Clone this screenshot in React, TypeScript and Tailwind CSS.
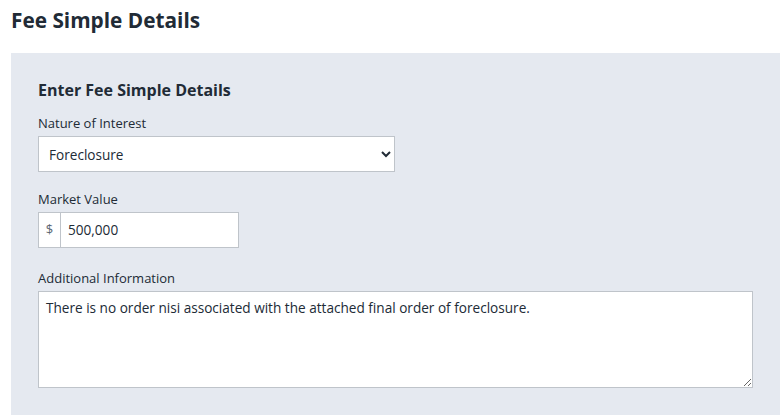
import { useState } from 'react';

export default function App() {
    const [interest, setInterest] = useState('Foreclosure');
    const [value, setValue] = useState('500,000');
    const [info, setInfo] = useState(
        'There is no order nisi associated with the attached final order of foreclosure.'
    );

    return (
        <div className="min-h-[415px] bg-white font-['Open_Sans',sans-serif] text-[#212b36]">
            <h1 className="pl-[11px] pt-[6px] text-[20.8px] leading-[28px] font-bold">
                Fee Simple Details
            </h1>

            <div className="mt-[19px] ml-[11px] bg-[#e5e9f0] pl-[27px] pr-[27px] pt-[25px] pb-[28px]">
                <h2 className="text-[16px] leading-[24px] font-bold">
                    Enter Fee Simple Details
                </h2>

                <label className="mt-[12px] block text-[13px] leading-[18px]">
                    Nature of Interest
                </label>
                <select
                    value={interest}
                    onChange={(e) => setInterest(e.target.value)}
                    className="mt-[4px] block h-[36px] w-[357px] border border-[#bfc4ca] bg-white pl-[6px] pr-[6px] text-[13.6px] outline-none"
                >
                    <option>Foreclosure</option>
                    <option>Fee Simple</option>
                    <option>Leasehold</option>
                </select>

                <label className="mt-[18px] block text-[13px] leading-[18px]">
                    Market Value
                </label>
                <div className="mt-[4px] flex h-[36px] w-[201px] border border-[#bfc4ca] bg-white">
                    <span className="flex w-[22px] items-center justify-center border-r border-[#bfc4ca] text-[13px] text-[#5b6672]">
                        $
                    </span>
                    <input
                        value={value}
                        onChange={(e) => setValue(e.target.value)}
                        className="min-w-0 flex-1 pl-[7px] text-[13.6px] outline-none"
                    />
                </div>

                <label className="mt-[21px] block text-[13px] leading-[18px]">
                    Additional Information
                </label>
                <textarea
                    value={info}
                    onChange={(e) => setInfo(e.target.value)}
                    className="mt-[4px] block h-[97px] w-full border border-[#bfc4ca] bg-white px-[7px] py-[6px] text-[13.6px] leading-[20px] outline-none"
                />
            </div>
        </div>
    );
}
